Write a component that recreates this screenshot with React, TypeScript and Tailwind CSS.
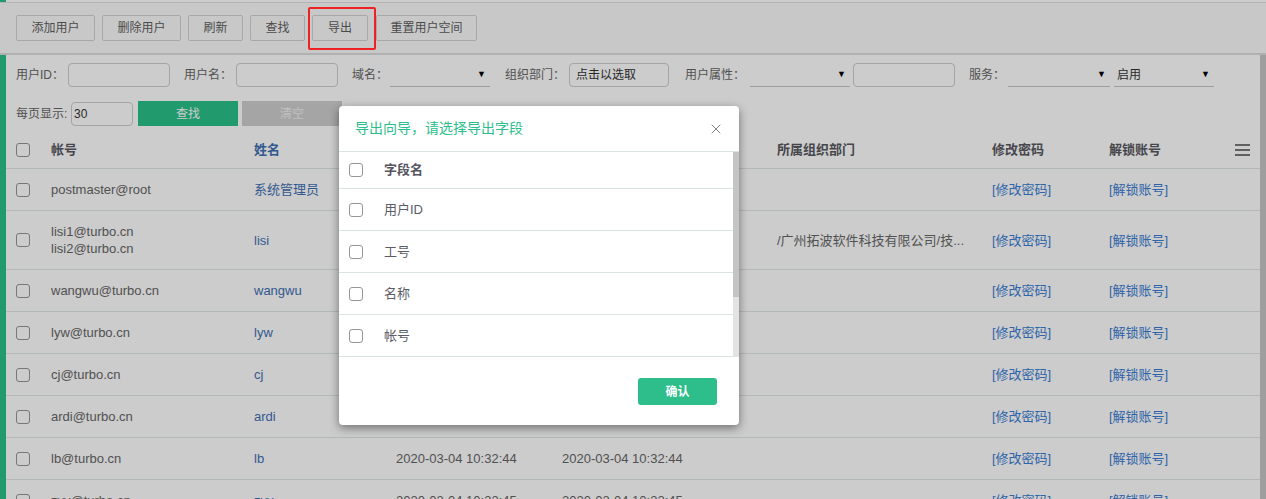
import React from "react";
import { X } from "lucide-react";

type Row = { acc: string[]; name: string; t1: string; t2: string; dept: string };

const rows: Row[] = [
  { acc: ["postmaster@root"], name: "系统管理员", t1: "", t2: "", dept: "" },
  { acc: ["lisi1@turbo.cn", "lisi2@turbo.cn"], name: "lisi", t1: "", t2: "", dept: "/广州拓波软件科技有限公司/技..." },
  { acc: ["wangwu@turbo.cn"], name: "wangwu", t1: "", t2: "", dept: "" },
  { acc: ["lyw@turbo.cn"], name: "lyw", t1: "", t2: "", dept: "" },
  { acc: ["cj@turbo.cn"], name: "cj", t1: "", t2: "", dept: "" },
  { acc: ["ardi@turbo.cn"], name: "ardi", t1: "", t2: "", dept: "" },
  { acc: ["lb@turbo.cn"], name: "lb", t1: "2020-03-04 10:32:44", t2: "2020-03-04 10:32:44", dept: "" },
  { acc: ["zyy@turbo.cn"], name: "zyy", t1: "2020-03-04 10:32:45", t2: "2020-03-04 10:32:45", dept: "" },
];

const cols = "grid grid-cols-[45px_203px_142px_166px_215px_215px_117px_1fr]";

function Box() {
  return <div className="w-[14px] h-[14px] border border-[#959595] rounded-[3px] bg-white" />;
}

function Select({ w, value }: { w: string; value?: string }) {
  return (
    <div className={`${w} h-[24px] border-b border-[#c6c6c6] flex items-center justify-between pl-[3px] pr-[4px]`}>
      <span className="text-[12px] text-[#333]">{value ?? ""}</span>
      <span className="text-[9px] text-black leading-none">▼</span>
    </div>
  );
}

function Input({ w, value }: { w: string; value?: string }) {
  return (
    <div className={`${w} h-[24px] border border-[#cdcdcd] rounded-[4px] bg-white flex items-center px-[2px] text-[12px] text-[#333]`}>
      {value ?? ""}
    </div>
  );
}

function Label({ text, cls }: { text: string; cls: string }) {
  return <span className={`${cls} text-[12px] text-[#666] whitespace-nowrap`}>{text}</span>;
}

export default function App() {
  const toolbarBtns: [string, string][] = [
    ["添加用户", "w-[79px]"],
    ["删除用户", "w-[79px]"],
    ["刷新", "w-[55px]"],
    ["查找", "w-[55px]"],
    ["导出", "w-[56px]"],
    ["重置用户空间", "w-[101px] ml-[1px]"],
  ];
  const fields = ["用户ID", "工号", "名称", "帐号"];
  return (
    <div className="relative w-[1266px] h-[499px] overflow-hidden bg-white font-['Liberation_Sans','Noto_Sans_CJK_SC',sans-serif]">
      <div className="flex flex-col h-full">
        <div className="h-[2px] flex shrink-0">
          <div className="w-[6px] bg-[#2ac18a]" />
        </div>
        {/* toolbar */}
        <div className="h-[53px] shrink-0 bg-[#fbfbfb] border-t border-[#e2e2e2] border-b-[2px] border-b-[#dcdcdc] flex items-start pt-[12px] pl-[16px] gap-[7px]">
          {toolbarBtns.map(([t, w]) => (
            <div key={t} className={`${w} h-[26px] border border-[#d2d2d2] rounded-[2px] bg-[#fbfbfb] flex items-center justify-center text-[12px] text-[#5e5e5e]`}>
              {t}
            </div>
          ))}
        </div>
        <div className="flex flex-1 min-h-0">
          <div className="w-[6px] bg-[#2ac18a] shrink-0" />
          <div className="flex-1 min-w-0 flex flex-col">
            {/* filter row 1 */}
            <div className="flex items-center h-[24px] mt-[8px] pl-[10px]">
              <Label text="用户ID：" cls="w-[52px]" />
              <Input w="w-[102px]" />
              <Label text="用户名：" cls="ml-[14px] w-[52px]" />
              <Input w="w-[102px]" />
              <Label text="域名：" cls="ml-[14px] w-[38px]" />
              <Select w="w-[100px]" />
              <Label text="组织部门：" cls="ml-[15px] w-[64px]" />
              <div className="w-[100px] h-[24px] border border-[#cdcdcd] rounded-[4px] bg-white flex items-center pl-[6px] text-[12px] text-[#333]">点击以选取</div>
              <Label text="用户属性：" cls="ml-[16px] w-[65px]" />
              <Select w="w-[100px]" />
              <div className="ml-[3px]">
                <Input w="w-[102px]" />
              </div>
              <Label text="服务：" cls="ml-[14px] w-[39px]" />
              <Select w="w-[102px]" />
              <div className="ml-[4px]">
                <Select w="w-[100px]" value="启用" />
              </div>
            </div>
            {/* filter row 2 */}
            <div className="flex items-center h-[25px] mt-[14px] pl-[10px]">
              <span className="text-[12px] text-[#666] w-[55px]">每页显示:</span>
              <Input w="w-[62px]" value="30" />
              <div className="ml-[5px] w-[100px] h-[25px] bg-[#2ac18a] text-white text-[12px] flex items-center justify-center">查找</div>
              <div className="ml-[4px] w-[100px] h-[25px] bg-[#cfcfcf] text-[#f0f0f0] text-[12px] flex items-center justify-center">清空</div>
            </div>
            {/* table */}
            <div className="mt-[6px]">
              <div className={`${cols} h-[37px] items-center border-b border-[#dfe8e6] text-[13px] font-bold text-[#585860]`}>
                <div className="pl-[10px]"><Box /></div>
                <div>帐号</div>
                <div className="text-[#3f6fb5]">姓名</div>
                <div />
                <div />
                <div>所属组织部门</div>
                <div>修改密码</div>
                <div className="flex items-center justify-between pr-[10px]">
                  <span>解锁账号</span>
                  <div className="flex flex-col gap-[3px]">
                    <div className="w-[15px] h-[2px] bg-[#777]" />
                    <div className="w-[15px] h-[2px] bg-[#777]" />
                    <div className="w-[15px] h-[2px] bg-[#777]" />
                  </div>
                </div>
              </div>
              {rows.map((r, i) => (
                <div key={i} className={`${cols} py-[12px] items-center border-b border-[#dfe8e6] text-[13px] leading-[17px] text-[#666]`}>
                  <div className="pl-[10px]"><Box /></div>
                  <div className="flex flex-col">
                    {r.acc.map((a) => (
                      <span key={a}>{a}</span>
                    ))}
                  </div>
                  <div className="text-[#3f6fb5]">{r.name}</div>
                  <div>{r.t1}</div>
                  <div>{r.t2}</div>
                  <div className="whitespace-nowrap">{r.dept}</div>
                  <div className="text-[#3a7dd4]">[修改密码]</div>
                  <div className="text-[#3a7dd4]">[解锁账号]</div>
                </div>
              ))}
            </div>
          </div>
          <div className="w-[6px] bg-[#c6c6c6] shrink-0" />
        </div>
      </div>

      {/* mask */}
      <div className="absolute inset-0 bg-black/20" />

      {/* modal */}
      <div className="absolute left-[339px] top-[106px] w-[400px] h-[319px] bg-white rounded-[4px] shadow-[0_3px_10px_rgba(0,0,0,0.45)] flex flex-col overflow-hidden">
        <div className="h-[46px] shrink-0 flex items-center justify-between pl-[16px] pr-[15px] border-b border-[#dbe4e2]">
          <span className="text-[14px] text-[#2dbe8c]">导出向导，请选择导出字段</span>
          <X size={16} strokeWidth={1.3} color="#6b6b75" />
        </div>
        <div className="flex h-[205px] shrink-0">
          <div className="flex-1 flex flex-col">
            <div className="h-[37px] shrink-0 flex items-center border-b border-[#dbe4e2] pl-[10px]">
              <Box />
              <span className="ml-[21px] text-[13px] font-bold text-[#555560]">字段名</span>
            </div>
            {fields.map((f) => (
              <div key={f} className="h-[42px] shrink-0 flex items-center border-b border-[#dbe4e2] pl-[10px]">
                <Box />
                <span className="ml-[21px] text-[13px] text-[#5c5c66]">{f}</span>
              </div>
            ))}
          </div>
          <div className="w-[6px] bg-[#e3e3e3] flex flex-col">
            <div className="h-[145px] bg-[#c4c4c4]" />
          </div>
        </div>
        <div className="flex-1 flex justify-end items-start pt-[21px] pr-[22px]">
          <div className="w-[79px] h-[27px] bg-[#2dbe8c] rounded-[3px] text-white text-[12px] font-bold flex items-center justify-center">确认</div>
        </div>
      </div>

      {/* annotation */}
      <div className="absolute left-[308px] top-[7px] w-[68px] h-[43px] border-2 border-[#ee2222] rounded-[2px]" />
    </div>
  );
}
